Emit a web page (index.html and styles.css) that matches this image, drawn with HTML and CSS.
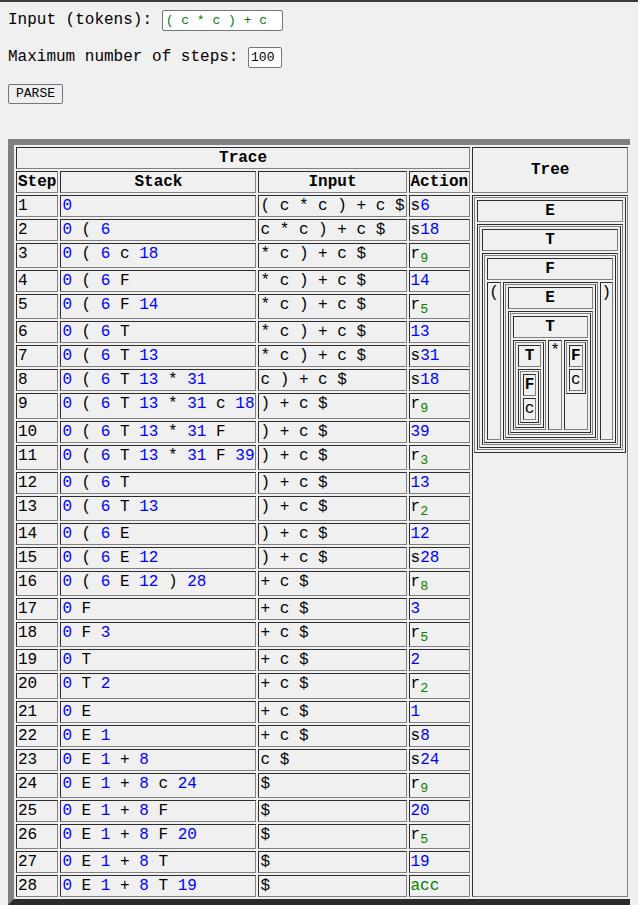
FILE: index.html
```html
<!DOCTYPE html>
<html>
<head>
<meta charset="utf-8">
<title>LR Parser Trace</title>
<link rel="stylesheet" href="styles.css">
</head>
<body>
<div class="field">Input (tokens): <span class="box tokens">( c * c ) + c</span></div>
<div class="field">Maximum number of steps: <span class="box steps">100</span></div>
<div class="actions"><button class="btn" type="button">PARSE</button></div>

<table class="trace">
<tr><th colspan="4">Trace</th><th rowspan="2">Tree</th></tr>
<tr><th>Step</th><th>Stack</th><th>Input</th><th>Action</th></tr>
<tr><td>1</td><td><span class="st">0</span></td><td>( c * c ) + c $</td><td>s<span class="st">6</span></td>
<td class="tree" rowspan="28">
<table class="node">
 <tr><th>E</th></tr>
 <tr><td>
  <table class="node">
   <tr><th>T</th></tr>
   <tr><td>
    <table class="node">
     <tr><th colspan="3">F</th></tr>
     <tr>
      <td>(</td>
      <td>
       <table class="node">
        <tr><th>E</th></tr>
        <tr><td>
         <table class="node">
          <tr><th colspan="3">T</th></tr>
          <tr>
           <td>
            <table class="node">
             <tr><th>T</th></tr>
             <tr><td>
              <table class="node">
               <tr><th>F</th></tr>
               <tr><td>c</td></tr>
              </table>
             </td></tr>
            </table>
           </td>
           <td>*</td>
           <td>
            <table class="node">
             <tr><th>F</th></tr>
             <tr><td>c</td></tr>
            </table>
           </td>
          </tr>
         </table>
        </td></tr>
       </table>
      </td>
      <td>)</td>
     </tr>
    </table>
   </td></tr>
  </table>
 </td></tr>
</table>
</td></tr>
<tr><td>2</td><td><span class="st">0</span> ( <span class="st">6</span></td><td>c * c ) + c $</td><td>s<span class="st">18</span></td></tr>
<tr><td>3</td><td><span class="st">0</span> ( <span class="st">6</span> c <span class="st">18</span></td><td>* c ) + c $</td><td>r<sub class="rd">9</sub></td></tr>
<tr><td>4</td><td><span class="st">0</span> ( <span class="st">6</span> F</td><td>* c ) + c $</td><td><span class="st">14</span></td></tr>
<tr><td>5</td><td><span class="st">0</span> ( <span class="st">6</span> F <span class="st">14</span></td><td>* c ) + c $</td><td>r<sub class="rd">5</sub></td></tr>
<tr><td>6</td><td><span class="st">0</span> ( <span class="st">6</span> T</td><td>* c ) + c $</td><td><span class="st">13</span></td></tr>
<tr><td>7</td><td><span class="st">0</span> ( <span class="st">6</span> T <span class="st">13</span></td><td>* c ) + c $</td><td>s<span class="st">31</span></td></tr>
<tr><td>8</td><td><span class="st">0</span> ( <span class="st">6</span> T <span class="st">13</span> * <span class="st">31</span></td><td>c ) + c $</td><td>s<span class="st">18</span></td></tr>
<tr><td>9</td><td><span class="st">0</span> ( <span class="st">6</span> T <span class="st">13</span> * <span class="st">31</span> c <span class="st">18</span></td><td>) + c $</td><td>r<sub class="rd">9</sub></td></tr>
<tr><td>10</td><td><span class="st">0</span> ( <span class="st">6</span> T <span class="st">13</span> * <span class="st">31</span> F</td><td>) + c $</td><td><span class="st">39</span></td></tr>
<tr><td>11</td><td><span class="st">0</span> ( <span class="st">6</span> T <span class="st">13</span> * <span class="st">31</span> F <span class="st">39</span></td><td>) + c $</td><td>r<sub class="rd">3</sub></td></tr>
<tr><td>12</td><td><span class="st">0</span> ( <span class="st">6</span> T</td><td>) + c $</td><td><span class="st">13</span></td></tr>
<tr><td>13</td><td><span class="st">0</span> ( <span class="st">6</span> T <span class="st">13</span></td><td>) + c $</td><td>r<sub class="rd">2</sub></td></tr>
<tr><td>14</td><td><span class="st">0</span> ( <span class="st">6</span> E</td><td>) + c $</td><td><span class="st">12</span></td></tr>
<tr><td>15</td><td><span class="st">0</span> ( <span class="st">6</span> E <span class="st">12</span></td><td>) + c $</td><td>s<span class="st">28</span></td></tr>
<tr><td>16</td><td><span class="st">0</span> ( <span class="st">6</span> E <span class="st">12</span> ) <span class="st">28</span></td><td>+ c $</td><td>r<sub class="rd">8</sub></td></tr>
<tr><td>17</td><td><span class="st">0</span> F</td><td>+ c $</td><td><span class="st">3</span></td></tr>
<tr><td>18</td><td><span class="st">0</span> F <span class="st">3</span></td><td>+ c $</td><td>r<sub class="rd">5</sub></td></tr>
<tr><td>19</td><td><span class="st">0</span> T</td><td>+ c $</td><td><span class="st">2</span></td></tr>
<tr><td>20</td><td><span class="st">0</span> T <span class="st">2</span></td><td>+ c $</td><td>r<sub class="rd">2</sub></td></tr>
<tr><td>21</td><td><span class="st">0</span> E</td><td>+ c $</td><td><span class="st">1</span></td></tr>
<tr><td>22</td><td><span class="st">0</span> E <span class="st">1</span></td><td>+ c $</td><td>s<span class="st">8</span></td></tr>
<tr><td>23</td><td><span class="st">0</span> E <span class="st">1</span> + <span class="st">8</span></td><td>c $</td><td>s<span class="st">24</span></td></tr>
<tr><td>24</td><td><span class="st">0</span> E <span class="st">1</span> + <span class="st">8</span> c <span class="st">24</span></td><td>$</td><td>r<sub class="rd">9</sub></td></tr>
<tr><td>25</td><td><span class="st">0</span> E <span class="st">1</span> + <span class="st">8</span> F</td><td>$</td><td><span class="st">20</span></td></tr>
<tr><td>26</td><td><span class="st">0</span> E <span class="st">1</span> + <span class="st">8</span> F <span class="st">20</span></td><td>$</td><td>r<sub class="rd">5</sub></td></tr>
<tr><td>27</td><td><span class="st">0</span> E <span class="st">1</span> + <span class="st">8</span> T</td><td>$</td><td><span class="st">19</span></td></tr>
<tr><td>28</td><td><span class="st">0</span> E <span class="st">1</span> + <span class="st">8</span> T <span class="st">19</span></td><td>$</td><td><span class="ok">acc</span></td></tr>
</table>
</body>
</html>
```

FILE: styles.css
```css
html {
  border-top: 2px solid #3c3c3c;
  background: #f0f0f0;
  overflow: hidden;
}

body {
  margin: 8px;
  font-family: "Liberation Mono", "Courier New", monospace;
  font-size: 16px;
  color: #000;
}

.field {
  margin: 0 0 16px;
  white-space: nowrap;
}

.box {
  display: inline-block;
  box-sizing: border-box;
  height: 21px;
  padding: 2px 2px;
  border: 1px solid #767676;
  border-radius: 2px;
  background: #fff;
  font-size: 13px;
  line-height: 15px;
  white-space: pre;
}

.tokens {
  width: 121px;
  padding-left: 3px;
  color: #008000;
}

.steps {
  width: 34px;
}

.actions {
  margin: 0;
}

.btn {
  display: inline-block;
  box-sizing: border-box;
  width: 55px;
  height: 20px;
  margin: 0;
  padding: 1px 7px;
  border: 1px solid #767676;
  border-radius: 2px;
  background: #efefef;
  color: #000;
  font-family: "Liberation Mono", "Courier New", monospace;
  font-size: 13px;
  line-height: 16px;
  text-align: left;
}

.trace {
  margin-top: 35px;
  border-collapse: separate;
  border-spacing: 2px;
  border: 6px solid;
  border-color: #808080 #2c2c2c #2c2c2c #808080;
  white-space: nowrap;
  font-size: 16px;
}

.trace td,
.trace th {
  border: 1px solid;
  border-color: #2c2c2c #808080 #808080 #2c2c2c;
  padding: 1px;
}

.trace th {
  font-weight: bold;
  text-align: center;
  vertical-align: middle;
}

.trace td {
  text-align: left;
  vertical-align: top;
}

.trace td.tree {
  vertical-align: top;
}

.node {
  border-collapse: separate;
  border-spacing: 2px;
  border: 1px solid;
  border-color: #808080 #2c2c2c #2c2c2c #808080;
}

.st {
  color: #0000ff;
}

.rd {
  color: #008000;
}

.ok {
  color: #008000;
}
```
